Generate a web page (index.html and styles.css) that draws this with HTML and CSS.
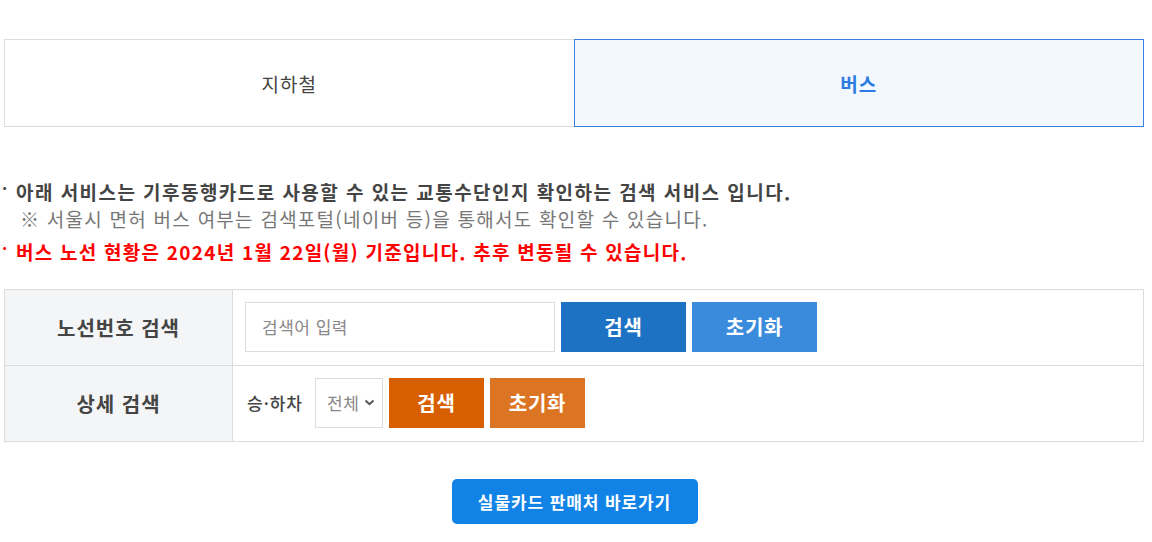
FILE: index.html
```html
<!DOCTYPE html>
<html lang="ko">
<head>
<meta charset="utf-8">
<link rel="stylesheet" href="styles.css">
</head>
<body>
<div class="wrap">
  <div class="tabs">
    <div class="tab">지하철</div>
    <div class="tab active">버스</div>
  </div>
  <div class="notice">
    <p class="line strong first"><span class="dot">·</span>아래 서비스는 기후동행카드로 사용할 수 있는 교통수단인지 확인하는 검색 서비스 입니다.</p>
    <p class="line sub">※ 서울시 면허 버스 여부는 검색포털(네이버 등)을 통해서도 확인할 수 있습니다.</p>
    <p class="line strong red"><span class="dot">·</span>버스 노선 현황은 2024년 1월 22일(월) 기준입니다. 추후 변동될 수 있습니다.</p>
  </div>
  <div class="table">
    <div class="row">
      <div class="th">노선번호 검색</div>
      <div class="td">
        <div class="input">검색어 입력</div>
        <div class="btn blue">검색</div>
        <div class="btn lightblue">초기화</div>
      </div>
    </div>
    <div class="row last">
      <div class="th">상세 검색</div>
      <div class="td">
        <span class="label">승·하차</span>
        <div class="select">전체<svg width="11" height="7" viewBox="0 0 11 7"><path d="M1.5 1.5 L5.5 5.2 L9.5 1.5" fill="none" stroke="#555" stroke-width="2"/></svg></div>
        <div class="btn orange small">검색</div>
        <div class="btn lightorange small">초기화</div>
      </div>
    </div>
  </div>
  <div class="bottom">
    <div class="go">실물카드 판매처 바로가기</div>
  </div>
</div>
</body>
</html>
```
FILE: styles.css
```css
* { box-sizing: border-box; }
body {
  margin: 0;
  font-family: "Noto Sans CJK KR", "Noto Sans", sans-serif;
  color: #333;
  background: #fff;
}
.wrap {
  width: 1140px;
  margin: 39px 0 0 4px;
}
.tabs {
  display: flex;
  height: 88px;
}
.tab {
  flex: 1;
  display: flex;
  align-items: center;
  justify-content: center;
  border: 1px solid #dcdcdc;
  font-size: 19px;
  color: #444;
  letter-spacing: 1px;
}
.tab:first-child { border-right: none; }
.tab.active {
  border-color: #3b80e0;
  background: #f3f8fe;
  color: #2b7be0;
  font-weight: 700;
}
.notice {
  margin-top: 52px;
}
.line {
  margin: 0;
  font-size: 19px;
  line-height: 26px;
  letter-spacing: 1.25px;
  position: relative;
  padding-left: 12px;
  white-space: nowrap;
}
.line.first { letter-spacing: 1.45px; }
.strong { font-weight: 700; color: #444; }
.sub { color: #777; padding-left: 16px; margin-top: 1px; }
.red { color: #f00; margin-top: 7px; }
.dot {
  position: absolute;
  left: -2px;
  top: -4px;
  font-size: 16px;
  letter-spacing: 0;
}
.table {
  margin-top: 24px;
  border: 1px solid #dcdcdc;
}
.row {
  display: flex;
  height: 76px;
  border-bottom: 1px solid #dcdcdc;
}
.row.last { border-bottom: none; height: 75px; }
.th {
  width: 228px;
  background: #f4f5f7;
  border-right: 1px solid #dcdcdc;
  display: flex;
  align-items: center;
  justify-content: center;
  font-size: 20px;
  font-weight: 700;
  color: #444;
  letter-spacing: 1px;
}
.td {
  flex: 1;
  display: flex;
  align-items: center;
  padding-left: 12px;
  padding-bottom: 2px;
  gap: 6px;
}
.input {
  width: 310px;
  height: 50px;
  border: 1px solid #dcdcdc;
  display: flex;
  align-items: center;
  padding-left: 16px;
  font-size: 17px;
  color: #888;
  letter-spacing: 0.5px;
}
.btn {
  width: 125px;
  height: 50px;
  display: flex;
  align-items: center;
  justify-content: center;
  color: #fff;
  font-weight: 700;
  font-size: 20px;
  letter-spacing: 0.8px;
}
.btn.small { width: 95px; }
.blue { background: #1e72c3; }
.lightblue { background: #3a8bdb; }
.orange { background: #d75f00; }
.lightorange { background: #db7523; }
.label {
  font-size: 17px;
  font-weight: 500;
  color: #444;
  margin-left: 2px;
  margin-right: 6px;
  letter-spacing: 1px;
}
.select {
  width: 68px;
  height: 50px;
  border: 1px solid #dcdcdc;
  display: flex;
  align-items: center;
  padding-left: 11px;
  gap: 5px;
  font-size: 17px;
  letter-spacing: 0.5px;
  color: #888;
}
.bottom {
  display: flex;
  justify-content: center;
  margin-top: 37px;
}
.go {
  width: 246px;
  height: 45px;
  background: #1283e6;
  border-radius: 5px;
  color: #fff;
  font-weight: 700;
  font-size: 17px;
  letter-spacing: 0.9px;
  display: flex;
  align-items: center;
  justify-content: center;
  margin-left: 1px;
}
```
